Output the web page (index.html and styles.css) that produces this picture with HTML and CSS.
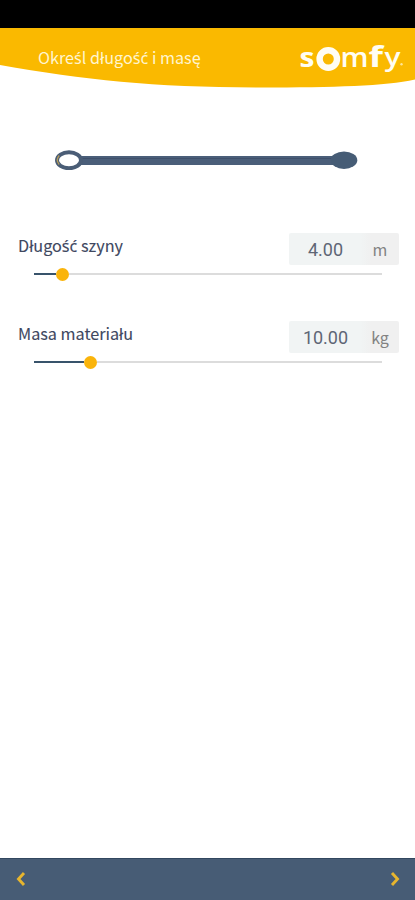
FILE: index.html
```html
<!DOCTYPE html>
<html lang="pl">
<head>
<meta charset="utf-8">
<meta name="viewport" content="width=device-width, initial-scale=1">
<title>Określ długość i masę</title>
<link rel="stylesheet" href="styles.css">
</head>
<body>
<div class="app">
  <div class="status-bar"></div>
  <header class="header">
    <svg class="header-shape" viewBox="0 0 415 60" aria-hidden="true"><path d="M0 0H415V51.5C385 58 335 59.5 260 59.5C155 59.5 85 52 0 37Z"/></svg>
    <h1 class="title">Okre<span class="accent">ś</span>l długo<span class="accent">ść</span> i masę</h1>
    <svg class="logo" viewBox="0 0 108 38" role="img" aria-label="somfy">
      <text class="logo-text" x="0.5" y="29" textLength="15" lengthAdjust="spacingAndGlyphs">s</text>
      <circle class="logo-ring" cx="29.3" cy="21" r="8.7"/>
      <text class="logo-text logo-m" x="41.5" y="29" textLength="28" lengthAdjust="spacingAndGlyphs">m</text>
      <text class="logo-text logo-f" x="69.5" y="28.5" textLength="14.5" lengthAdjust="spacingAndGlyphs">f</text>
      <text class="logo-text logo-y" x="85.5" y="28" textLength="16" lengthAdjust="spacingAndGlyphs">y</text>
      <circle class="logo-mark" cx="102.5" cy="26.3" r="1.2"/>
    </svg>
  </header>
  <main class="content">
    <svg class="rail" viewBox="0 0 304 20" aria-hidden="true">
      <path class="rail-bar" d="M25 10.5H280"/>
      <path class="rail-line" d="M27 8.5H278"/>
      <ellipse class="rail-knob" cx="290" cy="10.2" rx="13.3" ry="8.7"/>
      <ellipse class="rail-eye" cx="15" cy="10.2" rx="12" ry="8"/>
      <path class="rail-glint" d="M5.2 5.5Q1.3 10 5.2 14.5"/>
    </svg>
    <section class="field">
      <div class="row">
        <span class="label">Długo<span class="accent">ść</span> szyny</span>
        <div class="box"><span class="value">4.00</span><span class="unit">m</span></div>
      </div>
      <div class="slider"><span class="fill fill-length"></span><span class="thumb"></span><span class="track"></span></div>
    </section>
    <section class="field">
      <div class="row">
        <span class="label">Masa materiału</span>
        <div class="box"><span class="value">10.00</span><span class="unit">kg</span></div>
      </div>
      <div class="slider"><span class="fill fill-mass"></span><span class="thumb"></span><span class="track"></span></div>
    </section>
  </main>
  <footer class="footer">
    <svg class="arrow" viewBox="0 0 10 16" aria-label="Wstecz"><path d="M8 2L2.5 8L8 14"/></svg>
    <svg class="arrow" viewBox="0 0 10 16" aria-label="Dalej"><path d="M2 2L7.5 8L2 14"/></svg>
  </footer>
</div>
</body>
</html>
```
FILE: styles.css
```css
* { box-sizing: border-box; }
body { margin: 0; background: #fff; font-family: "Noto Sans CJK SC", "Noto Sans", sans-serif; }
svg { display: block; }
.app { height: 900px; display: flex; flex-direction: column; overflow: hidden; }
.status-bar { height: 28px; background: #000; flex: none; }
.header { height: 60px; flex: none; position: relative; display: flex; justify-content: space-between; padding: 0 8px 0 38px; }
.header-shape { position: absolute; left: 0; top: 0; width: 415px; height: 60px; fill: #fab900; }
.title { position: relative; margin: 16px 0 0; font-size: 16.2px; line-height: 26px; font-weight: 400; color: #fff5cf; white-space: nowrap; }
.accent { font-family: "Noto Sans", sans-serif; line-height: 1; }
.logo { position: relative; width: 108px; height: 38px; margin: 10px 0 0; overflow: visible; }
.logo-text { font-family: "Open Sans", sans-serif; font-size: 27px; font-weight: 700; fill: #fffdf3; }
.logo-m { font-weight: 600; }
.logo-f { font-size: 28px; font-weight: 700; }
.logo-y { font-size: 26px; font-weight: 600; }
.logo-ring { fill: none; stroke: #fffdf3; stroke-width: 6.4; }
.logo-mark { fill: #ffe698; }
.content { flex: 1; padding: 62px 16px 0; }
.rail { width: 304px; height: 20px; margin: 0 0 63px 38px; }
.rail-bar { fill: none; stroke: #4a5e79; stroke-width: 9; }
.rail-line { fill: none; stroke: #3f506b; stroke-width: 1; }
.rail-knob { fill: #465c75; }
.rail-eye { fill: #fff; stroke: #4a5d76; stroke-width: 4; }
.rail-glint { fill: none; stroke: #b49a58; stroke-width: 1.3; }
.field { height: 88px; }
.row { display: flex; justify-content: space-between; height: 32px; }
.label { padding-left: 2px; font-size: 16.2px; line-height: 24px; color: #40485f; white-space: nowrap; -webkit-text-stroke: .1px #40485f; }
.box { display: flex; align-items: center; width: 110px; height: 32px; border-radius: 2px; background: linear-gradient(90deg, #f1f4f4 65%, #f0f0f0 75%); }
.value { width: 73px; text-align: center; font: 400 18px/32px Roboto, sans-serif; padding-top: 1px; color: #5e6675; }
.unit { width: 37px; padding-right: 1px; text-align: center; font-size: 16px; line-height: 29px; color: #828282; }
.slider { display: flex; align-items: center; height: 14px; margin: 2px 17px 0 18px; }
.fill { height: 2px; background: #38536b; }
.fill-length { width: 22px; }
.fill-mass { width: 50px; }
.thumb { width: 13px; height: 13px; margin-left: -.5px; border-radius: 50%; background: #fab40b; }
.track { flex: 1; height: 2px; background: #dcdcdc; }
.footer { height: 42px; flex: none; display: flex; align-items: center; justify-content: space-between; padding: 0 15px 1px 16px; background: #475c75; border-top: 1px solid #32475f; }
.arrow { width: 10px; height: 16px; fill: none; stroke: #e7b52e; stroke-width: 2.9; }
```
